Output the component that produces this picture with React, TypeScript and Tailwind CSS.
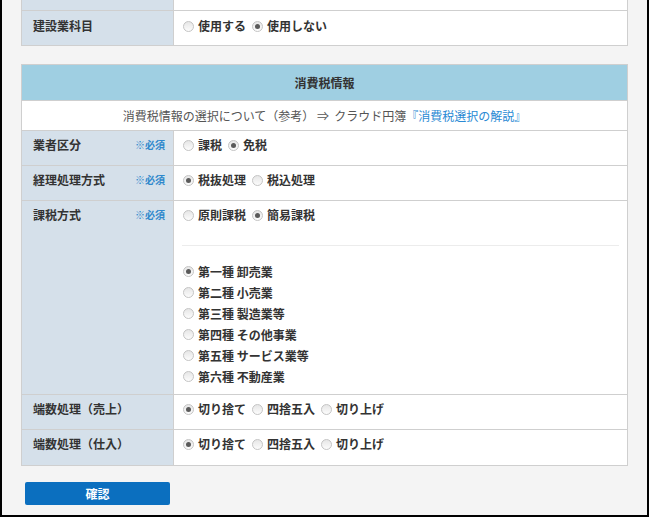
import React from "react";

const font = { fontFamily: '"Noto Sans CJK JP", "Noto Sans", sans-serif' };

function Radio({ checked, label }: { checked?: boolean; label: string }) {
  return (
    <span className="flex items-center h-4 leading-4 mr-[6px]">
      <span className="w-[11px] h-[11px] rounded-full border border-[#c4c4c4] bg-gradient-to-b from-[#e6e6e6] to-[#fcfcfc] flex items-center justify-center mr-[4px]">
        {checked && <span className="w-[5px] h-[5px] rounded-full bg-[#5a5a5a]" />}
      </span>
      <span>{label}</span>
    </span>
  );
}

function Label({ label, required }: any) {
  return (
    <div className="w-[152px] shrink-0 bg-[#d5e0ea] border-r border-[#cfcfcf] pl-[11px] pr-[8px] pt-[6px] flex justify-between">
      <span className="font-bold h-4 leading-4">{label}</span>
      {required && <span className="text-[10px] font-bold text-[#2f88cc] h-4 leading-4">※必須</span>}
    </div>
  );
}

function Row({ label, required, children, last }: any) {
  return (
    <div className={`flex h-[35px] ${last ? "" : "border-b border-[#cfcfcf]"}`}>
      <Label label={label} required={required} />
      <div className="flex-1 bg-white px-[9px] pt-[6px] flex items-start font-semibold">{children}</div>
    </div>
  );
}

export default function App() {
  return (
    <div
      style={font}
      className="w-[649px] h-[517px] bg-[#f4f4f4] border-l-2 border-r-2 border-b-2 border-black text-[12px] text-[#333] px-[19px] overflow-hidden"
    >
      <div className="border-x border-b border-[#cfcfcf]">
        <div className="flex h-[11px] border-b border-[#cfcfcf]">
          <div className="w-[152px] bg-[#d5e0ea] border-r border-[#cfcfcf]" />
          <div className="flex-1 bg-white" />
        </div>
        <div className="flex h-[34px]">
          <div className="w-[152px] shrink-0 bg-[#d5e0ea] border-r border-[#cfcfcf] pl-[11px] pt-[7px]">
            <span className="font-bold block h-4 leading-4">建設業科目</span>
          </div>
          <div className="flex-1 bg-white px-[9px] pt-[7px] flex items-start font-semibold">
            <Radio label="使用する" />
            <Radio checked label="使用しない" />
          </div>
        </div>
      </div>

      <div className="mt-[18px] border border-[#cfcfcf]">
        <div className="h-[36px] bg-[#9fcfe2] border-b border-[#cfcfcf] flex items-center justify-center font-bold leading-4">
          消費税情報
        </div>
        <div className="h-[30px] bg-white border-b border-[#cfcfcf] flex items-center justify-center text-[#555] leading-4">
          消費税情報の選択について（参考）&nbsp;⇒&nbsp;&nbsp;クラウド円簿
          <span className="text-[#2a8ad4]">『消費税選択の解説』</span>
        </div>
        <Row label="業者区分" required>
          <Radio label="課税" />
          <Radio checked label="免税" />
        </Row>
        <Row label="経理処理方式" required>
          <Radio checked label="税抜処理" />
          <Radio label="税込処理" />
        </Row>
        <div className="flex h-[194px] border-b border-[#cfcfcf]">
          <Label label="課税方式" required />
          <div className="flex-1 bg-white px-[8px] pt-[6px] font-semibold">
            <div className="flex pl-[1px]">
              <Radio label="原則課税" />
              <Radio checked label="簡易課税" />
            </div>
            <div className="mt-[22px] h-px bg-[#ececec]" />
            <div className="mt-[15px] pl-[1px] flex flex-col">
              {[
                ["第一種 卸売業", true],
                ["第二種 小売業", false],
                ["第三種 製造業等", false],
                ["第四種 その他事業", false],
                ["第五種 サービス業等", false],
                ["第六種 不動産業", false],
              ].map(([t, c]) => (
                <div key={t as string} className="h-[21px] flex items-center">
                  <Radio checked={c as boolean} label={t as string} />
                </div>
              ))}
            </div>
          </div>
        </div>
        <Row label="端数処理（売上）">
          <Radio checked label="切り捨て" />
          <Radio label="四捨五入" />
          <Radio label="切り上げ" />
        </Row>
        <Row label="端数処理（仕入）" last>
          <Radio checked label="切り捨て" />
          <Radio label="四捨五入" />
          <Radio label="切り上げ" />
        </Row>
      </div>

      <button className="mt-[16px] ml-[4px] w-[145px] h-[23px] bg-[#0b6fbf] rounded-[2px] text-white font-bold flex items-center justify-center leading-4">
        確認
      </button>
    </div>
  );
}
